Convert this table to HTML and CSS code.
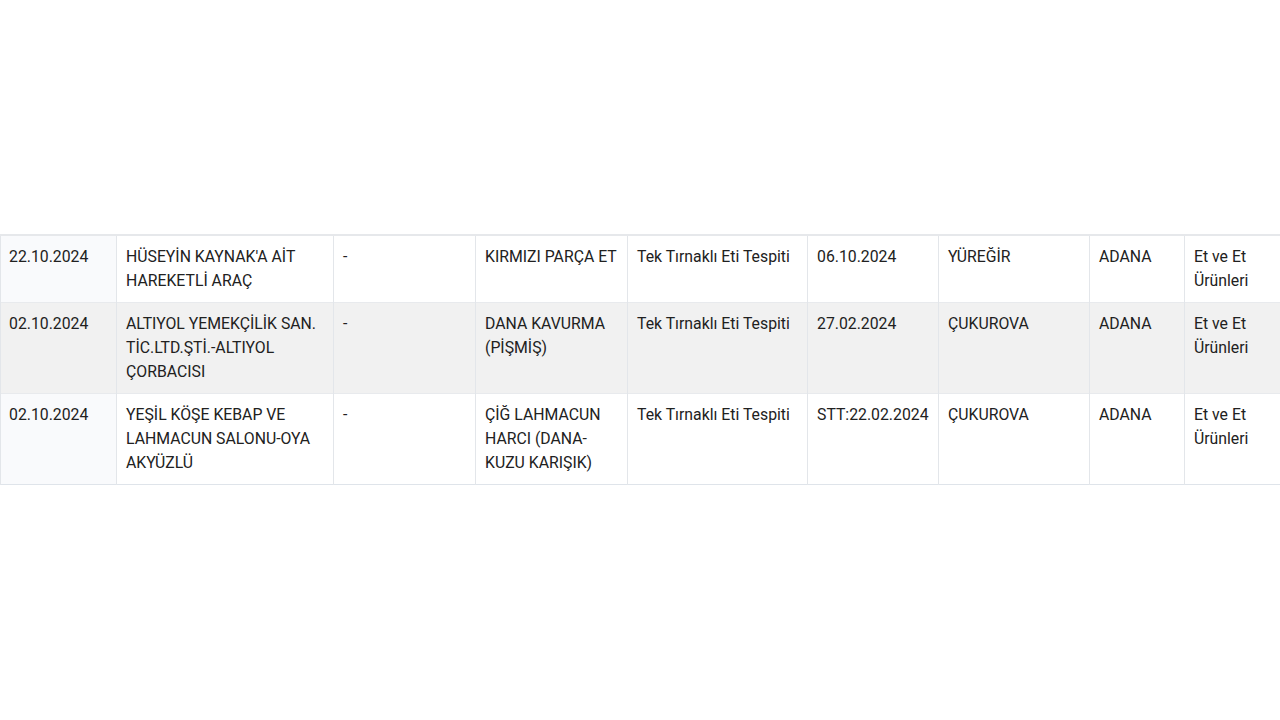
FILE: index.html
```html
<!DOCTYPE html>
<html lang="tr">
<head>
<meta charset="utf-8">
<link rel="stylesheet" href="styles.css">
</head>
<body>
<div class="page">
  <table class="data">
    <colgroup>
      <col class="c1"><col class="c2"><col class="c3"><col class="c4"><col class="c5"><col class="c6"><col class="c7"><col class="c8"><col class="c9">
    </colgroup>
    <tbody>
      <tr>
        <td class="first">22.10.2024</td>
        <td>HÜSEYİN KAYNAK'A AİT HAREKETLİ ARAÇ</td>
        <td>-</td>
        <td>KIRMIZI PARÇA ET</td>
        <td>Tek Tırnaklı Eti Tespiti</td>
        <td>06.10.2024</td>
        <td>YÜREĞİR</td>
        <td>ADANA</td>
        <td>Et ve Et Ürünleri</td>
      </tr>
      <tr class="alt">
        <td class="first">02.10.2024</td>
        <td>ALTIYOL YEMEKÇİLİK SAN. TİC.LTD.ŞTİ.-ALTIYOL ÇORBACISI</td>
        <td>-</td>
        <td>DANA KAVURMA (PİŞMİŞ)</td>
        <td>Tek Tırnaklı Eti Tespiti</td>
        <td>27.02.2024</td>
        <td>ÇUKUROVA</td>
        <td>ADANA</td>
        <td>Et ve Et Ürünleri</td>
      </tr>
      <tr>
        <td class="first">02.10.2024</td>
        <td>YEŞİL KÖŞE KEBAP VE LAHMACUN SALONU-OYA AKYÜZLÜ</td>
        <td>-</td>
        <td>ÇİĞ LAHMACUN HARCI (DANA-KUZU KARIŞIK)</td>
        <td>Tek Tırnaklı Eti Tespiti</td>
        <td>STT:22.02.2024</td>
        <td>ÇUKUROVA</td>
        <td>ADANA</td>
        <td>Et ve Et Ürünleri</td>
      </tr>
    </tbody>
  </table>
</div>
</body>
</html>
```
FILE: styles.css
```css
html, body {
  margin: 0;
  padding: 0;
  background: #ffffff;
  overflow: hidden;
}
.page {
  box-sizing: border-box;
  height: 720px;
  padding-bottom: 2px;
  display: flex;
  align-items: center;
  overflow: hidden;
}
.data {
  border-collapse: collapse;
  table-layout: fixed;
  width: 1284px;
  flex: none;
  font-family: Roboto, "Noto Sans", sans-serif;
  font-size: 15.8px;
  line-height: 24px;
  color: #212121;
  border-top: 2px solid #e6e8eb;
  border-bottom: 1px solid #dfe4ea;
}
.c1 { width: 116px; }
.c2 { width: 217px; }
.c3 { width: 142px; }
.c4 { width: 152px; }
.c5 { width: 180px; }
.c6 { width: 131px; }
.c7 { width: 151px; }
.c8 { width: 95px; }
.c9 { width: 100px; }
.data td {
  vertical-align: top;
  padding: 9px 9px 9px 9px;
  border-left: 1px solid #e3e6ea;
  border-top: 1px solid #e8eaed;
}
.data td.first {
  border-left: 1px solid #e3e6ea;
  background: #f9fafc;
  padding-left: 8px;
}
.data tr.alt td {
  background: #f1f1f1;
}
```
